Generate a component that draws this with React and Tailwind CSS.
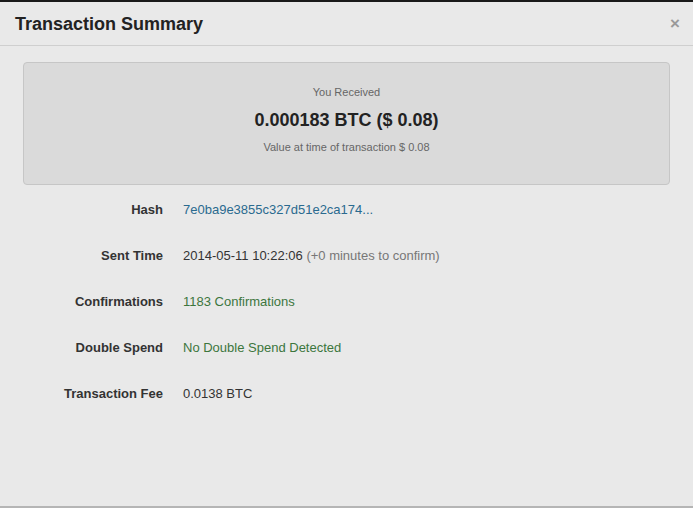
const ROWS = [
  { label: 'Hash', value: <span className="text-[#2a6a8f]">7e0ba9e3855c327d51e2ca174...</span> },
  {
    label: 'Sent Time',
    value: (
      <span className="text-[#333]">
        2014-05-11 10:22:06 <span className="text-[#777]">(+0 minutes to confirm)</span>
      </span>
    ),
  },
  { label: 'Confirmations', value: <span className="text-[#3c763d]">1183 Confirmations</span> },
  { label: 'Double Spend', value: <span className="text-[#3c763d]">No Double Spend Detected</span> },
  { label: 'Transaction Fee', value: <span className="text-[#333]">0.0138 BTC</span> },
]

export default function App() {
  return (
    <div
      className="w-[693px] h-[508px] bg-[#e9e9e9] border-t-2 border-[#1a1a1a] border-b-2 border-b-[#b5b5b5] flex flex-col overflow-hidden"
      style={{ fontFamily: '"Liberation Sans", Arial, sans-serif' }}
    >
      <div className="h-[44px] flex items-center justify-between pl-[15px] pr-[13px] border-b border-[#cfcfcf]">
        <h3 className="text-[18px] font-bold text-[#222] pt-[2px]">Transaction Summary</h3>
        <span className="text-[#9a9a9a] text-[17px] font-bold leading-none">×</span>
      </div>

      <div className="px-[23px] pt-[16px]">
        <div className="h-[123px] bg-[#dadada] border border-[#c6c6c6] rounded-[4px] flex flex-col items-center pt-[21px]">
          <p className="text-[11px] text-[#666]">You Received</p>
          <p className="text-[18px] font-bold text-[#222] mt-[6px]">0.000183 BTC ($ 0.08)</p>
          <p className="text-[11px] text-[#666] mt-[5px]">Value at time of transaction $ 0.08</p>
        </div>
      </div>

      <div className="flex flex-col gap-[28px] pt-[16px] text-[13px]">
        {ROWS.map(r => (
          <div key={r.label} className="flex items-center h-[18px]">
            <span className="w-[163px] text-right font-bold text-[#333]">{r.label}</span>
            <span className="ml-[20px]">{r.value}</span>
          </div>
        ))}
      </div>
    </div>
  )
}
